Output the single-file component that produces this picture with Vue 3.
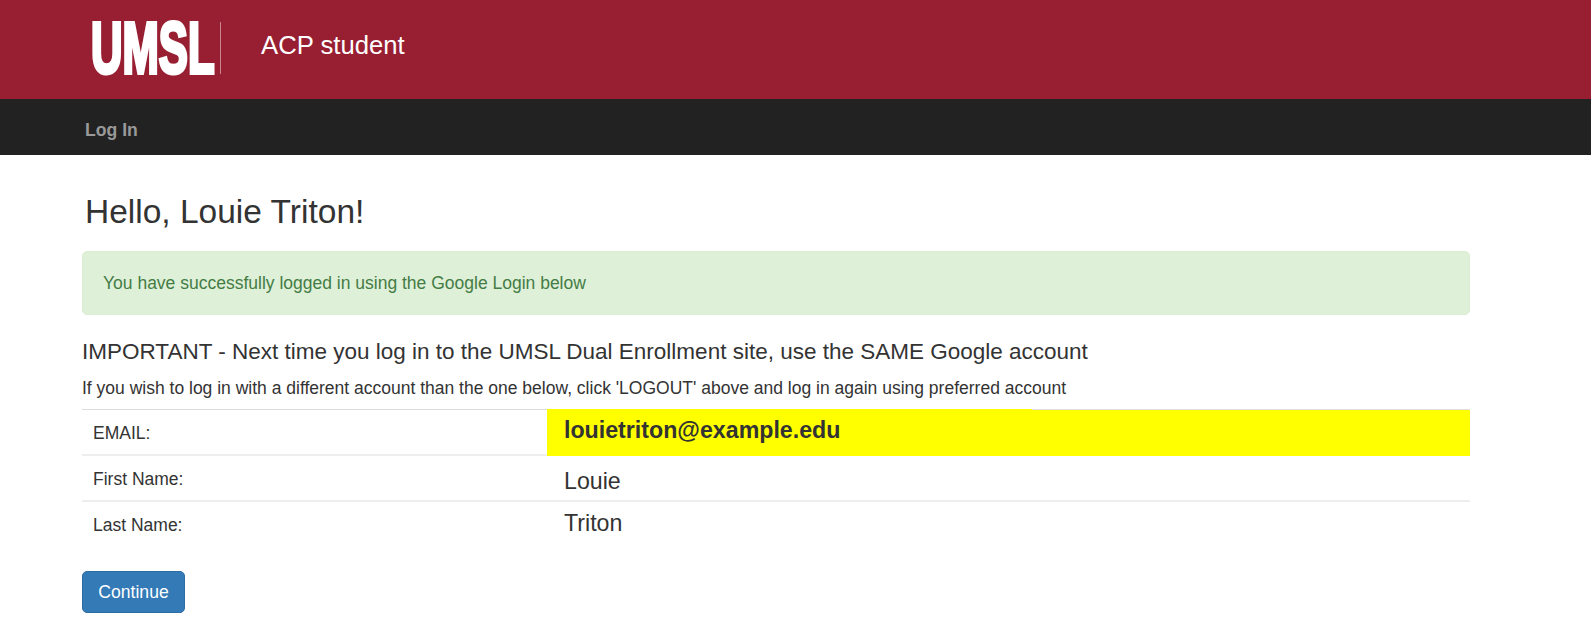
<template>
  <div class="page">
    <header class="brand-bar">
      <div class="logo">
        <svg width="126" height="84" viewBox="0 0 126 84" role="img" aria-label="UMSL">
          <text transform="translate(0 66.5) scale(1.09 1.82)" class="logo-text">UMSL</text>
        </svg>
      </div>
      <div class="app-name">ACP student</div>
    </header>

    <nav class="nav-bar">
      <a class="nav-link">Log In</a>
    </nav>

    <main class="content">
      <h1 class="greeting">Hello, {{ user.first }} {{ user.last }}!</h1>

      <div class="alert">You have successfully logged in using the Google Login below</div>

      <h4 class="important">IMPORTANT - Next time you log in to the UMSL Dual Enrollment site, use the SAME Google account</h4>
      <p class="hint">If you wish to log in with a different account than the one below, click 'LOGOUT' above and log in again using preferred account</p>

      <div class="details">
        <div v-for="row in rows" :key="row.label" class="row" :class="row.cls">
          <div class="label">{{ row.label }}</div>
          <div class="value">{{ row.value }}</div>
        </div>
      </div>

      <button class="continue">Continue</button>
    </main>
  </div>
</template>

<script setup>
const user = { first: 'Louie', last: 'Triton', email: 'louietriton@example.edu' }

const rows = [
  { label: 'EMAIL:', value: user.email, cls: 'row-email' },
  { label: 'First Name:', value: user.first, cls: 'row-first' },
  { label: 'Last Name:', value: user.last, cls: 'row-last' }
]
</script>

<style>
html, body {
  margin: 0;
  background: #fff;
}
</style>

<style scoped>
.page {
  font-family: "Liberation Sans", Arial, sans-serif;
  color: #333;
  height: 628px;
  overflow: hidden;
}

.brand-bar {
  height: 99px;
  background: #981e32;
  display: flex;
  align-items: center;
  padding-left: 91px;
}

.logo {
  width: 129px;
  height: 52px;
  border-right: 1px solid #c48892;
  margin-right: 40px;
  margin-top: -3px;
}

.logo svg {
  display: block;
  margin-top: -16px;
}

.logo-text {
  font-family: "Liberation Sans", Arial, sans-serif;
  font-weight: bold;
  font-size: 40px;
  fill: #fff;
  stroke: #fff;
  stroke-width: 2.2px;
  stroke-linejoin: miter;
}

.app-name {
  font-size: 25.7px;
  color: #fff;
  margin-top: -8px;
}

.nav-bar {
  height: 56px;
  background: #222;
  display: flex;
  align-items: center;
  padding: 7px 0 0 85px;
  box-sizing: border-box;
}

.nav-link {
  font-size: 17.6px;
  font-weight: bold;
  color: #999;
}

.content {
  padding: 0 121px 0 82px;
}

.greeting {
  font-size: 33.5px;
  font-weight: 400;
  line-height: 40px;
  margin: 37px 0 19px 3px;
}

.alert {
  height: 64px;
  box-sizing: border-box;
  background: #dff0d8;
  border: 1px solid #dbeed3;
  border-radius: 5px;
  color: #447c45;
  font-size: 17.5px;
  line-height: 62px;
  padding-left: 20px;
}

.important {
  font-size: 22.5px;
  font-weight: 400;
  line-height: 28px;
  margin: 23px 0 0;
}

.hint {
  font-size: 17.5px;
  line-height: 20px;
  margin: 12px 0 0;
}

.details {
  margin-top: 11px;
  border-top: 1px solid #ddd;
}

.row {
  display: grid;
  grid-template-columns: 465px 1fr;
  height: 46px;
  box-sizing: border-box;
  border-bottom: 2px solid #eee;
}

.row-last {
  border-bottom: 0;
}

.label {
  font-size: 17.5px;
  padding-left: 11px;
  line-height: 46px;
}

.value {
  position: relative;
  font-size: 23.2px;
  padding-left: 17px;
  line-height: 46px;
}

.row-email .value {
  background: #ff0;
  font-weight: bold;
  line-height: 40px;
}

/* yellow runs over the top rule for part of the cell */
.row-email .value::before {
  content: "";
  position: absolute;
  left: 0;
  top: -1px;
  width: 485px;
  height: 1px;
  background: #ff0;
}

.row-first .value {
  line-height: 50px;
}

/* rule is thinner under the name cell */
.row-first .value::after {
  content: "";
  position: absolute;
  left: 5px;
  top: 100%;
  width: 480px;
  height: 1px;
  background: #fff;
}

.row-last .value {
  line-height: 42px;
}

.continue {
  display: block;
  margin-top: 23px;
  width: 103px;
  height: 42px;
  background: #337ab7;
  border: 1px solid #2e6da4;
  border-radius: 5px;
  color: #fff;
  font-family: inherit;
  font-size: 17.6px;
  padding: 0;
}
</style>
